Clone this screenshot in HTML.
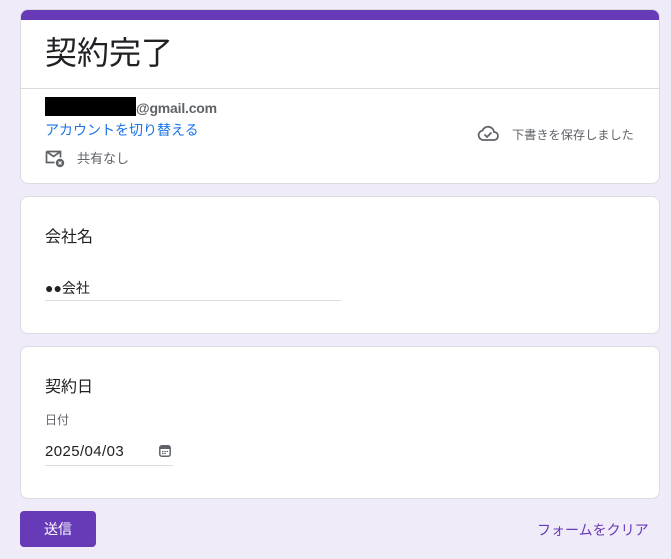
<!DOCTYPE html>
<html><head><meta charset="utf-8"><style>
*{margin:0;padding:0;box-sizing:border-box}
body{width:671px;height:559px;background:#f0ebf8;font-family:"Liberation Sans","Noto Sans CJK JP",sans-serif;position:relative;overflow:hidden;color:#202124}
.card{position:absolute;left:20px;width:640px;background:#fff;border:1px solid #dadce0;border-radius:8px}
.abs{position:absolute;white-space:nowrap}
</style></head><body>
<div class="card" style="top:9px;height:175px;overflow:hidden">
  <div style="height:10px;background:#673ab7"></div>
  <div class="abs" style="left:24px;top:23px;font-size:32px;line-height:40px;color:#202124">契約完了</div>
  <div style="position:absolute;left:0;right:0;top:78px;border-top:1px solid #dadce0"></div>
  <div class="abs" style="left:24px;top:87px;width:91px;height:19px;background:#000"></div>
  <div class="abs" style="left:115px;top:90px;font-size:14px;font-weight:bold;color:#5f6368;letter-spacing:-0.2px">@gmail.com</div>
  <div class="abs" style="left:24px;top:110px;font-size:14px;color:#1a73e8">アカウントを切り替える</div>
  <svg class="abs" style="left:24px;top:140px" width="20" height="18" viewBox="0 0 20 18"><path d="M1.5 1.5h14v6M1.5 1.5v11h8M1.5 1.5l7 5 7-5" fill="none" stroke="#5f6368" stroke-width="1.7"/><circle cx="15" cy="13" r="4.2" fill="#5f6368"/><path d="M13.5 11.5l3 3M16.5 11.5l-3 3" stroke="#fff" stroke-width="1.2"/></svg>
  <div class="abs" style="left:56px;top:138px;font-size:13px;color:#5f6368">共有なし</div>
  <svg class="abs" style="left:456px;top:114px" width="22" height="18" viewBox="0 0 22 18"><path d="M6 16h11a4 4 0 0 0 0-8 6 6 0 0 0-11.5-1.5A4.8 4.8 0 0 0 6 16z" fill="none" stroke="#5f6368" stroke-width="1.8"/><path d="M7.5 10.5l2.5 2.5 4.5-4.5" fill="none" stroke="#5f6368" stroke-width="1.8"/></svg>
  <div class="abs" style="left:491px;top:115px;font-size:12.2px;color:#5f6368">下書きを保存しました</div>
</div>
<div class="card" style="top:196px;height:138px">
  <div class="abs" style="left:24px;top:26px;font-size:16px">会社名</div>
  <div class="abs" style="left:24px;top:81px;font-size:14px">●●会社</div>
  <div class="abs" style="left:24px;top:103px;width:296px;border-top:1px solid #dadce0"></div>
</div>
<div class="card" style="top:346px;height:153px">
  <div class="abs" style="left:24px;top:26px;font-size:16px">契約日</div>
  <div class="abs" style="left:24px;top:64px;font-size:12px;color:#5f6368">日付</div>
  <div class="abs" style="left:24px;top:96px;font-size:15px;letter-spacing:0.4px">2025/04/03</div>
  <svg class="abs" style="left:138px;top:98px" width="12" height="12" viewBox="0 0 12 12"><rect x="0.8" y="0.8" width="10.4" height="10.4" rx="2" fill="none" stroke="#5f6368" stroke-width="1.5"/><rect x="1" y="1" width="10" height="3" fill="#5f6368"/><path d="M3 6.5h1.5M5.3 6.5h1.5M7.6 6.5h1.5M3 8.5h1.5M5.3 8.5h1.5" stroke="#5f6368" stroke-width="1.2"/></svg>
  <div class="abs" style="left:24px;top:118px;width:128px;border-top:1px solid #dadce0"></div>
</div>
<div class="abs" style="left:20px;top:511px;width:76px;height:36px;background:#673ab7;border-radius:4px;color:#fff;font-size:14px;text-align:center;line-height:36px">送信</div>
<div class="abs" style="left:537px;top:520px;font-size:14px;color:#673ab7">フォームをクリア</div>
</body></html>
